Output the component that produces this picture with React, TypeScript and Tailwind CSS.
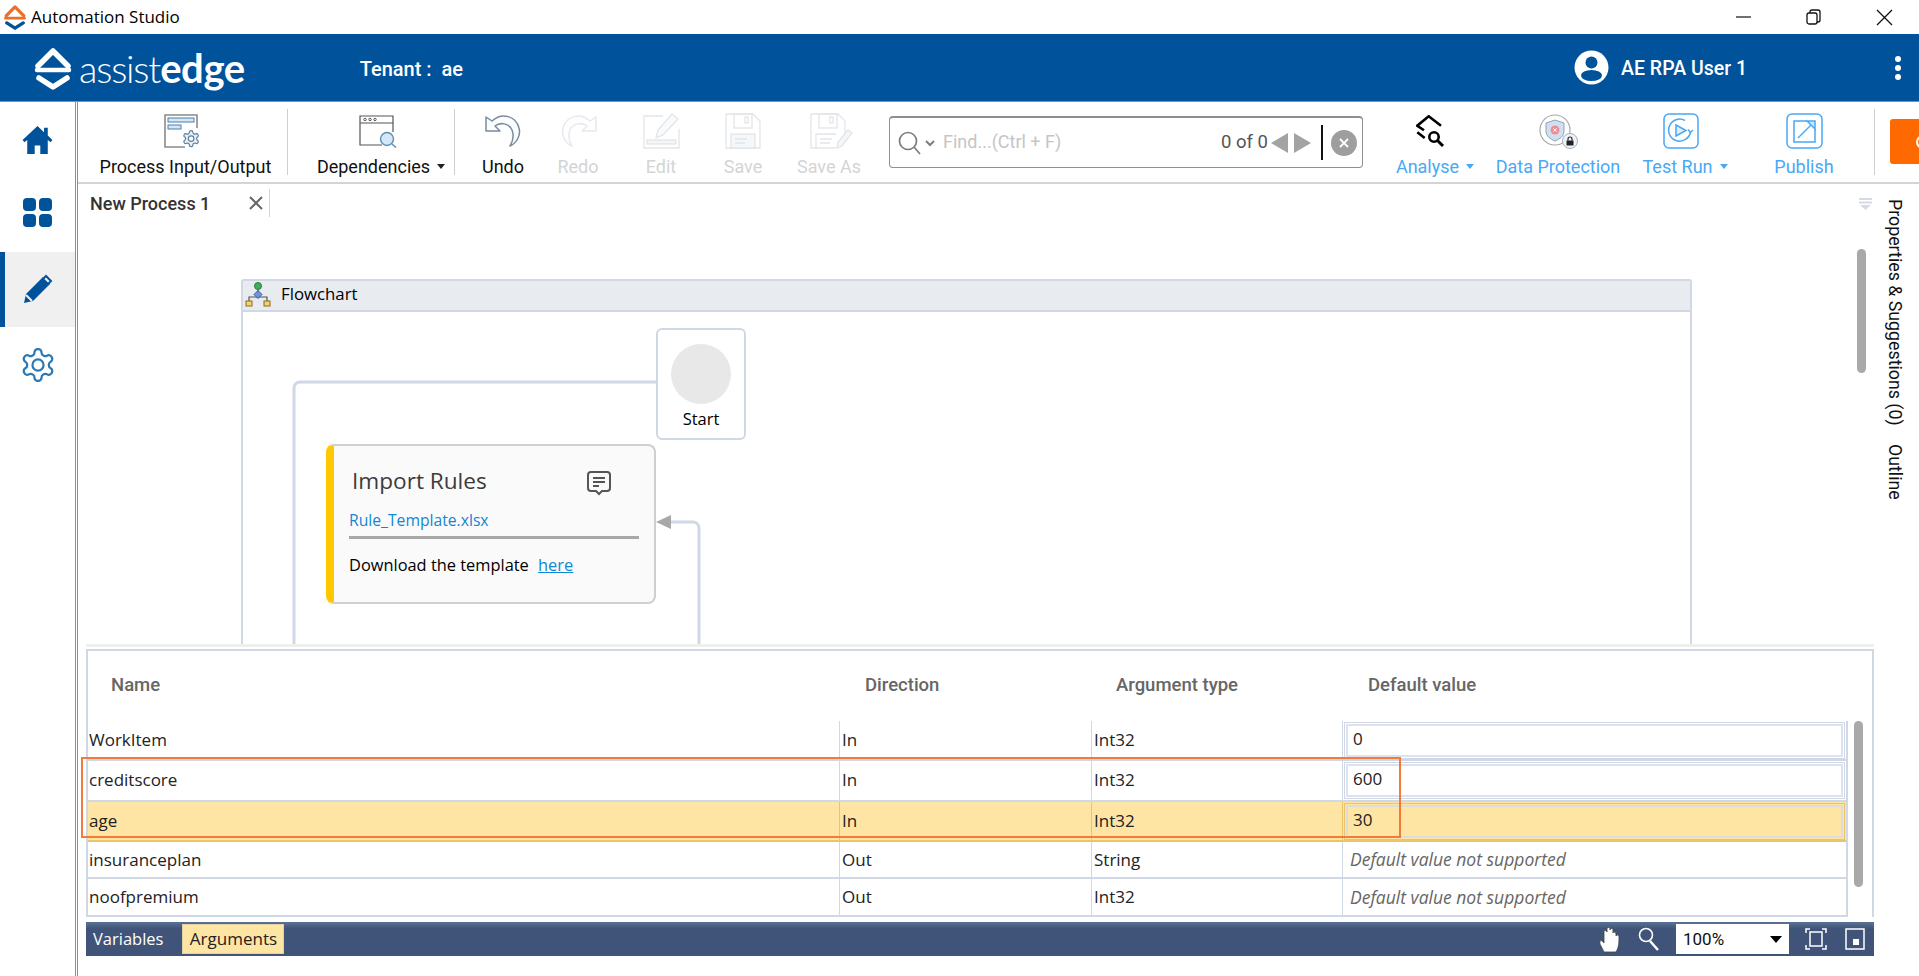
import { ReactNode } from 'react';

const roboto = "font-['Roboto',sans-serif]";
const segoe = "font-['Open_Sans',sans-serif]";

const gearPath = 'M12.22 2h-.44a2 2 0 0 0-2 2v.18a2 2 0 0 1-1 1.73l-.43.25a2 2 0 0 1-2 0l-.15-.08a2 2 0 0 0-2.73.73l-.22.38a2 2 0 0 0 .73 2.73l.15.1a2 2 0 0 1 1 1.72v.51a2 2 0 0 1-1 1.74l-.15.09a2 2 0 0 0-.73 2.73l.22.38a2 2 0 0 0 2.73.73l.15-.08a2 2 0 0 1 2 0l.43.25a2 2 0 0 1 1 1.73V20a2 2 0 0 0 2 2h.44a2 2 0 0 0 2-2v-.18a2 2 0 0 1 1-1.73l.43-.25a2 2 0 0 1 2 0l.15.08a2 2 0 0 0 2.73-.73l.22-.39a2 2 0 0 0-.73-2.73l-.15-.08a2 2 0 0 1-1-1.74v-.5a2 2 0 0 1 1-1.74l.15-.09a2 2 0 0 0 .73-2.73l-.22-.38a2 2 0 0 0-2.73-.73l-.15.08a2 2 0 0 1-2 0l-.43-.25a2 2 0 0 1-1-1.73V4a2 2 0 0 0-2-2z';

function MarkIcon({ className, top, bottom }: { className: string; top: string; bottom: string }) {
	return (
		<svg className={className} viewBox="0 0 40 44" fill="none">
			<path d="M5 20 20 5l15 15" stroke={top} strokeWidth="5.500" strokeLinejoin="round" strokeLinecap="round" />
			<path d="M4 24h32" stroke={top} strokeWidth="4.500" strokeLinecap="round" />
			<path d="M6 32l14 9 14-9" stroke={bottom} strokeWidth="5.500" strokeLinejoin="round" strokeLinecap="round" />
		</svg>
	);
}

function TitleBar() {
	return (
		<div className="flex h-[34px] items-center bg-white pl-[3px]">
			<MarkIcon className="h-[26px] w-[24px]" top="#e8702a" bottom="#00529b" />
			<span className={`ml-[4px] text-[17px] text-black ${segoe}`}>Automation Studio</span>
			<div className="ml-auto flex items-center">
				<svg className="h-[16px] w-[16px]" viewBox="0 0 16 16" stroke="#111" fill="none"><path d="M0 8h15" strokeWidth="1.2" /></svg>
				<svg className="ml-[54px] h-[16px] w-[16px]" viewBox="0 0 16 16" stroke="#111" fill="none" strokeWidth="1.3"><rect x="1" y="4" width="10" height="11" rx="2" /><path d="M4 4V3a2 2 0 0 1 2-2h6a2 2 0 0 1 2 2v8a2 2 0 0 1-2 2h-1" /></svg>
				<svg className="ml-[54px] mr-[26px] h-[17px] w-[17px]" viewBox="0 0 17 17" stroke="#111" fill="none" strokeWidth="1.3"><path d="M1 1l15 15M16 1 1 16" /></svg>
			</div>
		</div>
	);
}

function Header() {
	return (
		<div className="flex h-[68px] items-center border-b border-[#5b9bd5] bg-[#00529b] text-white">
			<MarkIcon className="ml-[32px] h-[44px] w-[42px]" top="#ffffff" bottom="#ffffff" />
			<div className="ml-[5px] flex items-baseline leading-none">
				<span className="font-['Lato',sans-serif] text-[38px] font-light tracking-[-1.200px]">assist</span>
				<span className="font-['Lato',sans-serif] text-[40px] font-bold tracking-[-0.400px]">edge</span>
			</div>
			<span className={`ml-[115px] mt-[2px] whitespace-pre text-[20px] font-medium ${roboto}`}>Tenant :  ae</span>
			<svg className="ml-[1111px] h-[35px] w-[35px]" viewBox="0 0 35 35">
				<circle cx="17.5" cy="17.5" r="17" fill="#fff" />
				<circle cx="17.5" cy="12.5" r="6" fill="#00529b" />
				<ellipse cx="17.5" cy="25.5" rx="10.5" ry="5.5" fill="#00529b" />
			</svg>
			<span className={`ml-[12px] mt-[2px] text-[19.5px] font-medium ${roboto}`}>AE RPA User 1</span>
			<div className="ml-auto mr-[18px] flex flex-col gap-[3px]">
				<span className="h-[6px] w-[6px] rounded-full bg-white" />
				<span className="h-[6px] w-[6px] rounded-full bg-white" />
				<span className="h-[6px] w-[6px] rounded-full bg-white" />
			</div>
		</div>
	);
}

function Rail() {
	return (
		<div className="flex w-[78px] shrink-0 flex-col border-r-[3px] border-double border-[#8f8f8f]">
			<div className="flex h-[75px] items-center justify-center text-[#00529b]">
				<svg className="h-[28px] w-[31px]" viewBox="0 0 32 30" fill="currentColor"><path d="M16 0 0 15l2 2.4L5 15v15h8v-9h6v9h8V15l3 2.4 2-2.4-5-4.7V2h-4v4.6z" /></svg>
			</div>
			<div className="flex h-[75px] items-center justify-center pb-[4px] text-[#00529b]">
				<svg className="h-[29px] w-[29px]" viewBox="0 0 29 29" fill="currentColor"><rect width="13" height="13" rx="4" /><rect x="16" width="13" height="13" rx="4" /><rect y="16" width="13" height="13" rx="4" /><rect x="16" y="16" width="13" height="13" rx="4" /></svg>
			</div>
			<div className="flex h-[75px] items-center justify-center border-l-[5px] border-[#00529b] bg-[#f0f0f0] pb-[2px] pr-[5px] text-[#00529b]">
				<svg className="h-[30px] w-[30px]" viewBox="0 0 30 30"><path d="M20 3 3 20l-2 9 9-2L27 10z" fill="currentColor" /><path d="M23 2l5 5-3 3-5-5z" fill="#f0f0f0" stroke="currentColor" strokeWidth="2" /><path d="M3 21l6 6" stroke="#f0f0f0" strokeWidth="2" /></svg>
			</div>
			<div className="flex h-[77px] items-center justify-center pb-[2px] text-[#2a78b5]">
				<svg className="h-[38px] w-[38px]" viewBox="0 0 24 24" fill="none" stroke="currentColor" strokeWidth="1.4" strokeLinejoin="round"><path d={gearPath} /><circle cx="12" cy="12" r="3.5" /></svg>
			</div>
		</div>
	);
}

function Caret({ color }: { color: string }) {
	return <span className={`ml-[7px] inline-block h-0 w-0 border-x-[4px] border-t-[5px] border-x-transparent ${color}`} />;
}

function ToolItem({ width, label, color, caret, icon, labelClass = '' }: { width: string; label: string; color: string; caret?: string; icon: ReactNode; labelClass?: string }) {
	return (
		<div className={`flex shrink-0 flex-col items-center ${width}`}>
			<div className="flex h-[38px] items-center justify-center">{icon}</div>
			<div className={`mt-[6px] flex h-[20px] items-center text-[18px] ${color} ${labelClass} ${roboto}`}>
				<span className="whitespace-nowrap">{label}</span>
				{caret && <Caret color={caret} />}
			</div>
		</div>
	);
}

function Toolbar() {
	const off = 'text-[#d4d4d4]';
	return (
		<div className="flex h-[82px] shrink-0 items-start border-b-2 border-[#d4d4d4] pt-[10px]">
			<ToolItem width="w-[209px]" label="Process Input/Output" labelClass="ml-[6px]" color="text-[#111]" icon={
				<svg className="h-[34px] w-[38px]" viewBox="0 0 38 34" fill="none">
					<path d="M21 33H1V1h32v13" stroke="#8a8a8a" strokeWidth="1.600" />
					<rect x="4" y="4" width="26" height="4" fill="#d3e7f7" stroke="#4f7fa8" />
					<rect x="4" y="11" width="13" height="4" fill="#d3e7f7" stroke="#4f7fa8" />
					<g transform="translate(17.500 15) scale(0.800)">
						<path d={gearPath} fill="#e3eff9" stroke="#5f7f9a" strokeWidth="1.500" />
						<circle cx="12" cy="12" r="3.500" fill="#fff" stroke="#5f7f9a" strokeWidth="1.500" />
					</g>
				</svg>
			} />
			<div className="mt-[-3px] h-[66px] w-px shrink-0 bg-[#cfcfcf]" />
			<ToolItem width="w-[166px]" label="Dependencies" labelClass="ml-[20px]" color="text-[#111]" caret="border-t-[#222]" icon={
				<svg className="ml-[14px] h-[33px] w-[38px]" viewBox="0 0 38 33" fill="none" stroke="#555">
					<path d="M23 30H1V1h33v16" strokeWidth="1.2" />
					<path d="M1 8h33" strokeWidth="1.2" />
					<circle cx="6" cy="4.5" r="1.2" /><circle cx="11" cy="4.5" r="1.2" /><circle cx="16" cy="4.5" r="1.2" />
					<circle cx="28" cy="24" r="6.5" fill="#d3e7f7" stroke="#5f8fb5" strokeWidth="1.4" />
					<path d="M33 29l4 3.5" stroke="#5f8fb5" strokeWidth="1.5" />
				</svg>
			} />
			<div className="mt-[-3px] h-[66px] w-px shrink-0 bg-[#cfcfcf]" />
			<ToolItem width="w-[96px]" label="Undo" color="text-[#111]" icon={
				<svg className="h-[32px] w-[37px]" viewBox="0 0 37 32" fill="#fbfcfd" stroke="#7a8b9e" strokeWidth="1.500" strokeLinejoin="round">
					<path d="M1 2v14h14l-5-5c5-4 14-3 17 4 2 5 1 11-2 16 7-3 11-11 9-18C31 1 17-3 7 6z" />
				</svg>
			} />
			<ToolItem width="w-[54px]" label="Redo" color={off} icon={
				<svg className="h-[32px] w-[37px]" viewBox="0 0 37 32" fill="#fefefe" stroke="#e6e9ed" strokeWidth="1.500" strokeLinejoin="round">
					<path d="M36 2v14H22l5-5c-5-4-14-3-17 4-2 5-1 11 2 16-7-3-11-11-9-18C6 1 20-3 30 6z" />
				</svg>
			} />
			<ToolItem width="w-[112px]" label="Edit" color={off} icon={
				<svg className="h-[36px] w-[37px]" viewBox="0 0 37 36" fill="none" stroke="#e2e5e9" strokeWidth="1.300">
					<path d="M20 3H1v32h35V16" />
					<rect x="4" y="27" width="29" height="4" fill="#f4f7fa" />
					<path d="M13 25l2-8L29 1l6 5-15 16z" fill="#f8fafc" />
				</svg>
			} />
			<ToolItem width="w-[52px]" label="Save" color={off} icon={
				<svg className="h-[36px] w-[36px]" viewBox="0 0 36 36" fill="none" stroke="#e2e5e9" strokeWidth="1.300">
					<path d="M1 1h27l7 7v27H1z" />
					<rect x="9" y="1" width="18" height="14" />
					<rect x="20" y="4" width="3" height="6" />
					<rect x="6" y="21" width="24" height="14" fill="#f4f8fb" />
					<path d="M10 26h12M10 30h10" />
				</svg>
			} />
			<ToolItem width="w-[120px]" label="Save As" color={off} icon={
				<svg className="ml-[4px] h-[36px] w-[43px]" viewBox="0 0 43 36" fill="none" stroke="#e2e5e9" strokeWidth="1.300">
					<path d="M26 35H1V1h27l7 7v12" />
					<rect x="9" y="1" width="18" height="14" />
					<rect x="20" y="4" width="3" height="6" />
					<path d="M6 35V21h20M10 26h12M10 30h10" />
					<path d="M27 35l1-6 10-12 4 3-10 13z" fill="#f4f7fa" />
				</svg>
			} />
			<div className="mt-[4px] flex h-[52px] w-[474px] shrink-0 items-center rounded-[4px] border border-t-2 border-[#8f8f8f] pl-[8px] pr-[5px]">
				<svg className="h-[24px] w-[24px]" viewBox="0 0 24 24" fill="none" stroke="#7d7d7d" strokeWidth="1.7"><circle cx="10" cy="10" r="8.5" /><path d="M16 16l6 7" /></svg>
				<svg className="ml-[3px] h-[8px] w-[10px]" viewBox="0 0 10 8" fill="none" stroke="#7d7d7d" strokeWidth="2"><path d="M1 2l4 4 4-4" /></svg>
				<span className={`ml-[8px] mt-[-3px] text-[18px] text-[#c5c5c5] ${roboto}`}>Find...(Ctrl + F)</span>
				<span className={`ml-auto text-[18.5px] text-[#555] ${roboto}`}>0 of 0</span>
				<span className="ml-[3px] h-0 w-0 border-y-[10px] border-r-[17px] border-y-transparent border-r-[#a3a3a3]" />
				<span className="ml-[6px] h-0 w-0 border-y-[10px] border-l-[17px] border-y-transparent border-l-[#a3a3a3]" />
				<span className="ml-[10px] h-[35px] w-[2px] bg-[#111]" />
				<span className="ml-[8px] flex h-[26px] w-[26px] items-center justify-center rounded-full bg-[#9e9e9e]">
					<svg className="h-[10px] w-[10px]" viewBox="0 0 10 10" stroke="#fff" strokeWidth="1.8"><path d="M1 1l8 8M9 1 1 9" /></svg>
				</span>
			</div>
			<ToolItem width="w-[134px]" label="Analyse" labelClass="ml-[10px]" color="text-[#4aa8f5]" caret="border-t-[#4aa8f5]" icon={
				<svg className="h-[32px] w-[29px]" viewBox="0 0 29 32" fill="none" stroke="#000" strokeWidth="2.600">
					<path d="M25 10.700 12.700 1.300 1.300 10.700 8 15.300" />
					<path d="M1.300 17.300 8.700 23" />
					<circle cx="18" cy="22" r="4.700" />
					<path d="M21.500 25.500 27 31" strokeWidth="3" />
				</svg>
			} />
			<ToolItem width="w-[122px]" label="Data Protection" color="text-[#4aa8f5]" icon={
				<svg className="h-[35px] w-[39px]" viewBox="0 0 39 35" fill="none">
					<circle cx="16" cy="16" r="15" stroke="#a8a8a8" strokeWidth="1.200" />
					<path d="M16 6l9 3v8c0 5-4 8-9 10-5-2-9-5-9-10V9z" fill="#cfe0f0" stroke="#8fa3b5" />
					<circle cx="16" cy="16" r="4.500" fill="#f28b92" />
					<path d="M14.300 14.300l3.400 3.400M17.700 14.300l-3.400 3.400" stroke="#fff" strokeWidth="1" />
					<circle cx="31" cy="27" r="7.500" fill="#eef3f8" stroke="#9fb1c1" />
					<rect x="27.500" y="26.500" width="7" height="5" fill="#222" />
					<path d="M29 26.500V25a2 2 0 0 1 4 0v1.500" stroke="#222" strokeWidth="1.200" />
				</svg>
			} />
			<ToolItem width="w-[124px]" label="Test Run" labelClass="ml-[8px]" color="text-[#4aa8f5]" caret="border-t-[#4aa8f5]" icon={
				<svg className="h-[36px] w-[36px]" viewBox="0 0 36 36" fill="none" stroke="#4aa8f5" strokeWidth="1.500">
					<rect x="1" y="1" width="34" height="34" rx="5" />
					<path d="M22 7.500A11 11 0 1 0 27.500 19" />
					<path d="M25 16.500l2.500 3 2.500-2.500" />
					<path d="M13 12l10 5.500-10 5.500z" fill="#dcedfc" />
				</svg>
			} />
			<ToolItem width="w-[122px]" label="Publish" color="text-[#4aa8f5]" icon={
				<svg className="h-[36px] w-[37px]" viewBox="0 0 37 36" fill="none" stroke="#4aa8f5" strokeWidth="1.500">
					<rect x="1" y="1" width="35" height="34" rx="5" />
					<path d="M21 8H8v21h21V16" />
					<path d="M12 25 28 9" />
					<path d="M21 8h8v8z" fill="#cfe6fb" />
				</svg>
			} />
			<div className="ml-[9px] mt-[-3px] h-[66px] w-px shrink-0 bg-[#cfcfcf]" />
			<div className="ml-[15px] mt-[7px] flex h-[45px] flex-1 items-center overflow-hidden rounded-l-[3px] bg-[#ff6a00] pl-[26px]">
				<span className="h-[14px] w-[14px] shrink-0 rounded-full border-2 border-white" />
			</div>
		</div>
	);
}

function FlowIcon() {
	return (
		<svg className="h-[25px] w-[26px]" viewBox="0 0 26 25" fill="none">
			<path d="M4 20v-5h18v5M13 6v6" stroke="#555" strokeWidth="1.2" />
			<circle cx="13" cy="4" r="3.500" fill="#3fae5c" stroke="#2c7a41" />
			<path d="M13 8.500l4 4-4 4-4-4z" fill="#6f93d6" stroke="#3c5a96" />
			<rect x="1" y="19" width="6" height="5" fill="#f6d26a" stroke="#8a6d1d" />
			<rect x="19" y="19" width="6" height="5" fill="#f6d26a" stroke="#8a6d1d" />
		</svg>
	);
}

function Canvas() {
	return (
		<div className="relative flex-1 overflow-hidden">
			<div className="flex h-[38px] items-center">
				<div className={`ml-[12px] w-[159px] text-[18px] font-medium text-[#333] ${roboto}`}>New Process 1</div>
				<svg className="h-[14px] w-[14px]" viewBox="0 0 14 14" stroke="#666" strokeWidth="2"><path d="M1 1l12 12M13 1 1 13" /></svg>
				<div className="ml-[6px] h-[28px] w-px bg-[#d4d4d4]" />
			</div>
			<div className="absolute left-[163px] top-[95px] h-[400px] w-[1451px] rounded-t-[3px] border-x-2 border-t-2 border-[#d0d7e5]">
				<div className={`flex h-[31px] items-center border-b-2 border-[#d0d7e5] bg-[#e8ebef] pb-[3px] pl-[2px] text-[16.8px] text-black ${segoe}`}>
					<FlowIcon />
					<span className="ml-[10px]">Flowchart</span>
				</div>
			</div>
			{/* connectors */}
			<svg className="absolute left-[200px] top-[190px] h-[280px] w-[500px]" viewBox="0 0 500 280" fill="none" stroke="#d0d7e5" strokeWidth="3">
				<path d="M378 8H22a6 6 0 0 0-6 6v266" />
				<path d="M392 148h23a6 6 0 0 1 6 6v126" />
			</svg>
			<svg className="absolute left-[578px] top-[331px] h-[14px] w-[15px]" viewBox="0 0 15 14"><path d="M0 7 15 0v14z" fill="#a8a8a8" /></svg>
			<div className="absolute left-[578px] top-[144px] flex h-[112px] w-[90px] flex-col items-center rounded-[6px] border-2 border-[#d0d7e5] bg-white pt-[14px]">
				<div className="h-[60px] w-[60px] rounded-full bg-[#e8e8e8]" />
				<span className={`mt-[3px] text-[16.5px] text-black ${segoe}`}>Start</span>
			</div>
			<div className="absolute left-[248px] top-[260px] flex h-[160px] w-[330px] flex-col rounded-[8px] border-2 border-l-[8px] border-[#cfcfcf] border-l-[#ffc800] bg-[#fafafa] pl-[15px] pr-[15px]">
				<div className="mt-[18px] flex h-[34px] items-center justify-between pl-[3px]">
					<span className={`text-[22.6px] text-[#3c3c3c] ${segoe}`}>Import Rules</span>
					<svg className="mr-[27px] mt-[4px] h-[26px] w-[26px]" viewBox="0 0 26 26" fill="none" stroke="#555" strokeWidth="2"><path d="M5 2h16a3 3 0 0 1 3 3v13a3 3 0 0 1-3 3h-5l-3 3-3-3H5a3 3 0 0 1-3-3V5a3 3 0 0 1 3-3z" /><path d="M7 8h12M7 12h12M7 16h6" /></svg>
				</div>
				<span className={`mt-[11px] text-[15.7px] text-[#1186d4] ${segoe}`}>Rule_Template.xlsx</span>
				<div className="mt-[3px] h-[3px] bg-[#a8a8a8]" />
				<div className={`mt-[14px] text-[16.4px] text-black ${segoe}`}>
					Download the template <a className="ml-[5px] text-[#1186d4] underline">here</a>
				</div>
			</div>
			<svg className="absolute right-[47px] top-[14px] h-[12px] w-[13px]" viewBox="0 0 13 12"><path d="M0 0h13v2H0zM0 3.500h13v2H0z" fill="#d5dbe5" /><path d="M1 7h11l-5.500 5z" fill="#d5dbe5" /></svg>
			<div className="absolute right-[53px] top-[65px] h-[124px] w-[9px] rounded-full bg-[#a9a9a9]" />
			<div className={`absolute right-[12px] top-[15px] flex gap-[18px] text-[17.8px] leading-[24px] text-[#111] [writing-mode:vertical-rl] ${roboto}`}>
				<span>Properties &amp; Suggestions (0)</span>
				<span>Outline</span>
			</div>
		</div>
	);
}

const rows = [
	{ name: 'WorkItem', dir: 'In', type: 'Int32', value: '0', rowClass: 'h-[40px]', kind: 'input' },
	{ name: 'creditscore', dir: 'In', type: 'Int32', value: '600', rowClass: 'h-[41px]', kind: 'input' },
	{ name: 'age', dir: 'In', type: 'Int32', value: '30', rowClass: 'h-[40px]', kind: 'selected' },
	{ name: 'insuranceplan', dir: 'Out', type: 'String', value: 'Default value not supported', rowClass: 'h-[37px]', kind: 'none' },
	{ name: 'noofpremium', dir: 'Out', type: 'Int32', value: 'Default value not supported', rowClass: 'h-[38px]', kind: 'none' },
];

function ArgumentRow({ row }: { row: (typeof rows)[number] }) {
	const selected = row.kind === 'selected';
	const cell = selected ? 'border-[#ecc466]' : 'border-[#d0d7e5]';
	const lift = row.kind === 'none' ? '' : 'pb-[2px]';
	return (
		<div className={`grid grid-cols-[752px_252px_251px_503px] items-stretch border-b-2 text-[17px] text-[#222] ${segoe} ${row.rowClass} ${selected ? 'border-[#ecc466] bg-[#fee5a3]' : 'border-[#d0d7e5]'}`}>
			<div className={`flex items-center border-r pl-[1px] ${lift} ${cell}`}>{row.name}</div>
			<div className={`flex items-center border-r pl-[2px] ${lift} ${cell}`}>{row.dir}</div>
			<div className={`flex items-center border-r pl-[2px] ${lift} ${cell}`}>{row.type}</div>
			{row.kind === 'none' ? (
				<div className="flex items-center pl-[7px] text-[17.5px] italic text-[#666]">{row.value}</div>
			) : (
				<div className={`m-px flex border p-px ${selected ? 'border-[#ecc466]' : 'border-[#d0d7e5]'}`}>
					<div className={`flex flex-1 items-center border-2 pb-[3px] pl-[5px] ${selected ? 'border-[#dcdcdc]' : 'border-[#dde2ec] bg-white'}`}>{row.value}</div>
				</div>
			)}
		</div>
	);
}

function ArgumentsPanel() {
	return (
		<div className="relative ml-[8px] mr-[45px] flex h-[332px] shrink-0 flex-col">
			<div className="h-[4px] bg-[#efefef]" />
			<div className="mt-[2px] flex flex-1 flex-col border-r-2 border-t-2 border-[#d0d7e5]">
				<div className={`grid h-[70px] shrink-0 grid-cols-[752px_252px_251px_503px] items-center border-l-2 border-[#d0d7e5] text-[18.5px] font-medium text-[#666] ${roboto}`}>
					<span className="pl-[23px]">Name</span>
					<span className="pl-[25px]">Direction</span>
					<span className="pl-[24px]">Argument type</span>
					<span className="pl-[25px]">Default value</span>
				</div>
				<div className="relative flex-1 border-l-2 border-[#d0d7e5]">
					<div className="w-[1760px] border-r-2 border-[#d0d7e5]">
						{rows.map((row) => <ArgumentRow key={row.name} row={row} />)}
					</div>
					<div className="absolute right-[9px] top-0 h-[166px] w-[9px] rounded-full bg-[#a9a9a9]" />
				</div>
			</div>
			<div className={`mb-[20px] mt-[5px] flex h-[34px] shrink-0 items-center bg-gradient-to-b from-[#5c7196] from-0% to-[#3f5478] to-20% text-[16.5px] text-white ${segoe}`}>
				<span className="ml-[7px]">Variables</span>
				<span className="ml-[19px] flex h-[30px] w-[102px] items-center justify-center border border-[#e2d2a4] bg-[#fee5a3] text-[17px] text-[#222]">Arguments</span>
				<svg className="ml-auto h-[27px] w-[23px]" viewBox="0 0 23 27" fill="#fff" stroke="#444" strokeWidth="0.8"><path d="M5 26c-2-5-5-8-4-11 1-1 3 0 4 2V6c0-2 2-2 3 0V3c0-2 3-2 3 0v1c0-2 3-2 3 0v3c0-2 3-1 3 1v2c1-2 3-1 3 1 0 5 0 10-3 15z" /></svg>
				<svg className="ml-[16px] h-[24px] w-[22px]" viewBox="0 0 22 24" fill="none"><circle cx="8" cy="8" r="6.500" stroke="#fff" strokeWidth="1.600" /><path d="M12 14l8 9" stroke="#fff" strokeWidth="2.500" /></svg>
				<div className={`ml-[16px] flex h-[30px] w-[113px] items-center bg-white pl-[7px] pr-[7px] text-[17px] text-[#111] ${roboto}`}>
					<span className="mt-[2px]">100%</span>
					<span className="ml-auto h-0 w-0 border-x-[6px] border-t-[7px] border-x-transparent border-t-black" />
				</div>
				<svg className="ml-[16px] h-[22px] w-[22px]" viewBox="0 0 22 22" fill="none" stroke="#fff" strokeWidth="1.500"><rect x="5" y="4" width="12" height="14" /><path d="M1 5V1h4M17 1h4v4M1 17v4h4M17 21h4v-4" /></svg>
				<svg className="ml-[18px] mr-[9px] h-[22px] w-[20px]" viewBox="0 0 20 22" fill="none"><rect x="1" y="1" width="18" height="20" stroke="#fff" strokeWidth="1.500" /><rect x="8" y="11" width="6" height="6" fill="#fff" /></svg>
			</div>
			{/* orange annotation box drawn on the original screenshot */}
			<div className="absolute left-[-5px] top-[113px] h-[81px] w-[1320px] border-2 border-[#f47a3c]" />
		</div>
	);
}

export default function App() {
	return (
		<div className="flex h-[976px] w-[1919px] flex-col overflow-hidden bg-white">
			<TitleBar />
			<Header />
			<div className="flex min-h-0 flex-1">
				<Rail />
				<div className="flex min-w-0 flex-1 flex-col">
					<Toolbar />
					<Canvas />
					<ArgumentsPanel />
				</div>
			</div>
		</div>
	);
}
